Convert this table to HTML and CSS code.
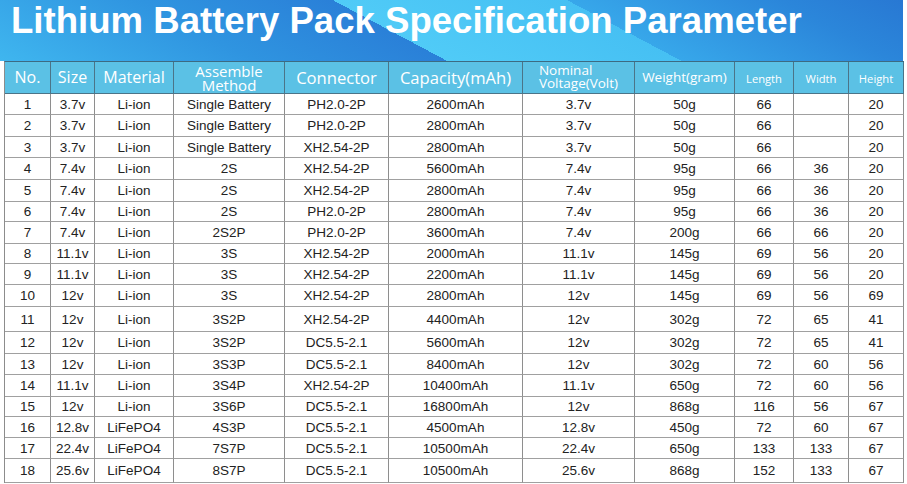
FILE: index.html
```html
<!DOCTYPE html>
<html lang="en">
<head>
<meta charset="utf-8">
<title>Lithium Battery Pack Specification Parameter</title>
<link rel="stylesheet" href="styles.css">
</head>
<body>
<header class="banner"><h1 class="title">Lithium Battery Pack Specification Parameter</h1></header>
<div class="sheet">
  <div class="row head">
    <div class="cell">No.</div>
    <div class="cell">Size</div>
    <div class="cell">Material</div>
    <div class="cell two"><span class="stack"><span class="ln">Assemble</span><span class="ln">Method</span></span></div>
    <div class="cell md">Connector</div>
    <div class="cell md">Capacity(mAh)</div>
    <div class="cell two left"><span class="stack"><span class="ln">Nominal</span><span class="ln">Voltage(Volt)</span></span></div>
    <div class="cell sm">Weight(gram)</div>
    <div class="cell xs">Length</div>
    <div class="cell xs">Width</div>
    <div class="cell xs">Height</div>
  </div>
  <div class="row h21"><div class="cell">1</div><div class="cell">3.7v</div><div class="cell">Li-ion</div><div class="cell">Single Battery</div><div class="cell">PH2.0-2P</div><div class="cell">2600mAh</div><div class="cell">3.7v</div><div class="cell">50g</div><div class="cell">66</div><div class="cell"></div><div class="cell">20</div></div>
  <div class="row h22"><div class="cell">2</div><div class="cell">3.7v</div><div class="cell">Li-ion</div><div class="cell">Single Battery</div><div class="cell">PH2.0-2P</div><div class="cell">2800mAh</div><div class="cell">3.7v</div><div class="cell">50g</div><div class="cell">66</div><div class="cell"></div><div class="cell">20</div></div>
  <div class="row h21"><div class="cell">3</div><div class="cell">3.7v</div><div class="cell">Li-ion</div><div class="cell">Single Battery</div><div class="cell">XH2.54-2P</div><div class="cell">2800mAh</div><div class="cell">3.7v</div><div class="cell">50g</div><div class="cell">66</div><div class="cell"></div><div class="cell">20</div></div>
  <div class="row h22"><div class="cell">4</div><div class="cell">7.4v</div><div class="cell">Li-ion</div><div class="cell">2S</div><div class="cell">XH2.54-2P</div><div class="cell">5600mAh</div><div class="cell">7.4v</div><div class="cell">95g</div><div class="cell">66</div><div class="cell">36</div><div class="cell">20</div></div>
  <div class="row h22"><div class="cell">5</div><div class="cell">7.4v</div><div class="cell">Li-ion</div><div class="cell">2S</div><div class="cell">XH2.54-2P</div><div class="cell">2800mAh</div><div class="cell">7.4v</div><div class="cell">95g</div><div class="cell">66</div><div class="cell">36</div><div class="cell">20</div></div>
  <div class="row h20"><div class="cell">6</div><div class="cell">7.4v</div><div class="cell">Li-ion</div><div class="cell">2S</div><div class="cell">PH2.0-2P</div><div class="cell">2800mAh</div><div class="cell">7.4v</div><div class="cell">95g</div><div class="cell">66</div><div class="cell">36</div><div class="cell">20</div></div>
  <div class="row h22"><div class="cell">7</div><div class="cell">7.4v</div><div class="cell">Li-ion</div><div class="cell">2S2P</div><div class="cell">PH2.0-2P</div><div class="cell">3600mAh</div><div class="cell">7.4v</div><div class="cell">200g</div><div class="cell">66</div><div class="cell">66</div><div class="cell">20</div></div>
  <div class="row h20"><div class="cell">8</div><div class="cell">11.1v</div><div class="cell">Li-ion</div><div class="cell">3S</div><div class="cell">XH2.54-2P</div><div class="cell">2000mAh</div><div class="cell">11.1v</div><div class="cell">145g</div><div class="cell">69</div><div class="cell">56</div><div class="cell">20</div></div>
  <div class="row h21"><div class="cell">9</div><div class="cell">11.1v</div><div class="cell">Li-ion</div><div class="cell">3S</div><div class="cell">XH2.54-2P</div><div class="cell">2200mAh</div><div class="cell">11.1v</div><div class="cell">145g</div><div class="cell">69</div><div class="cell">56</div><div class="cell">20</div></div>
  <div class="row h22"><div class="cell">10</div><div class="cell">12v</div><div class="cell">Li-ion</div><div class="cell">3S</div><div class="cell">XH2.54-2P</div><div class="cell">2800mAh</div><div class="cell">12v</div><div class="cell">145g</div><div class="cell">69</div><div class="cell">56</div><div class="cell">69</div></div>
  <div class="row h25"><div class="cell">11</div><div class="cell">12v</div><div class="cell">Li-ion</div><div class="cell">3S2P</div><div class="cell">XH2.54-2P</div><div class="cell">4400mAh</div><div class="cell">12v</div><div class="cell">302g</div><div class="cell">72</div><div class="cell">65</div><div class="cell">41</div></div>
  <div class="row h22"><div class="cell">12</div><div class="cell">12v</div><div class="cell">Li-ion</div><div class="cell">3S2P</div><div class="cell">DC5.5-2.1</div><div class="cell">5600mAh</div><div class="cell">12v</div><div class="cell">302g</div><div class="cell">72</div><div class="cell">65</div><div class="cell">41</div></div>
  <div class="row h21"><div class="cell">13</div><div class="cell">12v</div><div class="cell">Li-ion</div><div class="cell">3S3P</div><div class="cell">DC5.5-2.1</div><div class="cell">8400mAh</div><div class="cell">12v</div><div class="cell">302g</div><div class="cell">72</div><div class="cell">60</div><div class="cell">56</div></div>
  <div class="row h22"><div class="cell">14</div><div class="cell">11.1v</div><div class="cell">Li-ion</div><div class="cell">3S4P</div><div class="cell">XH2.54-2P</div><div class="cell">10400mAh</div><div class="cell">11.1v</div><div class="cell">650g</div><div class="cell">72</div><div class="cell">60</div><div class="cell">56</div></div>
  <div class="row h20"><div class="cell">15</div><div class="cell">12v</div><div class="cell">Li-ion</div><div class="cell">3S6P</div><div class="cell">DC5.5-2.1</div><div class="cell">16800mAh</div><div class="cell">12v</div><div class="cell">868g</div><div class="cell">116</div><div class="cell">56</div><div class="cell">67</div></div>
  <div class="row h21"><div class="cell">16</div><div class="cell">12.8v</div><div class="cell">LiFePO4</div><div class="cell">4S3P</div><div class="cell">DC5.5-2.1</div><div class="cell">4500mAh</div><div class="cell">12.8v</div><div class="cell">450g</div><div class="cell">72</div><div class="cell">60</div><div class="cell">67</div></div>
  <div class="row h21"><div class="cell">17</div><div class="cell">22.4v</div><div class="cell">LiFePO4</div><div class="cell">7S7P</div><div class="cell">DC5.5-2.1</div><div class="cell">10500mAh</div><div class="cell">22.4v</div><div class="cell">650g</div><div class="cell">133</div><div class="cell">133</div><div class="cell">67</div></div>
  <div class="row h24"><div class="cell">18</div><div class="cell">25.6v</div><div class="cell">LiFePO4</div><div class="cell">8S7P</div><div class="cell">DC5.5-2.1</div><div class="cell">10500mAh</div><div class="cell">25.6v</div><div class="cell">868g</div><div class="cell">152</div><div class="cell">133</div><div class="cell">67</div></div>
</div>
</body>
</html>
```
FILE: styles.css
```css
* { box-sizing: border-box; }

body {
  margin: 0;
  background: #ffffff;
  font-family: "Liberation Sans", Arial, sans-serif;
}

.banner {
  width: 903px;
  height: 61px;
  background: linear-gradient(28deg,
    #3fb6ef 0px,
    #2f94e0 120px,
    #2a80d8 210px,
    #50cbf7 210px,
    #46c0f3 320px,
    #37a7ea 320px,
    #2b86da 420px,
    #2878d3 478px);
}

.title {
  margin: 0;
  padding: 1px 0 0 11px;
  font-family: "Liberation Sans", Arial, sans-serif;
  font-weight: bold;
  font-size: 36.6px;
  line-height: 40px;
  color: #ffffff;
  white-space: nowrap;
}

.sheet {
  margin-left: 4px;
  width: 900px;
  border-left: 1px solid #8c8c8c;
  border-top: 1px solid #3d6b82;
}

.row {
  display: grid;
  grid-template-columns: 46px 44px 79px 111px 104px 134px 112px 100px 59px 55px 55px;
}

.h20 { height: 20px; }
.h21 { height: 21px; }
.h22 { height: 22px; }
.h24 { height: 24px; }
.h25 { height: 25px; }

.cell {
  display: flex;
  align-items: center;
  justify-content: center;
  border-right: 1px solid #8e8e8e;
  border-bottom: 1px solid #a0a0a0;
  font-size: 13.5px;
  color: #222222;
  white-space: nowrap;
  overflow: hidden;
}

.head {
  height: 32px;
  background: #5bc1e5;
}

.head .cell {
  font-family: "Open Sans", "Noto Sans", sans-serif;
  font-size: 16px;
  color: #ffffff;
  border-right-color: #4b7488;
  border-bottom-color: #4b7488;
  line-height: 1.2;
}

.head .md { font-size: 16.6px; }
.head .sm { font-size: 13.5px; }
.head .xs { font-size: 11.2px; padding-top: 3px; }

.stack {
  display: flex;
  flex-direction: column;
}

.head .two {
  font-size: 15px;
  text-align: center;
}

.head .two .ln {
  display: block;
  height: 14px;
  line-height: 14px;
}

.head .two.left {
  font-size: 13.5px;
  text-align: left;
  padding-bottom: 2px;
}

.head .two.left .ln {
  height: 13px;
  line-height: 13px;
}
```
